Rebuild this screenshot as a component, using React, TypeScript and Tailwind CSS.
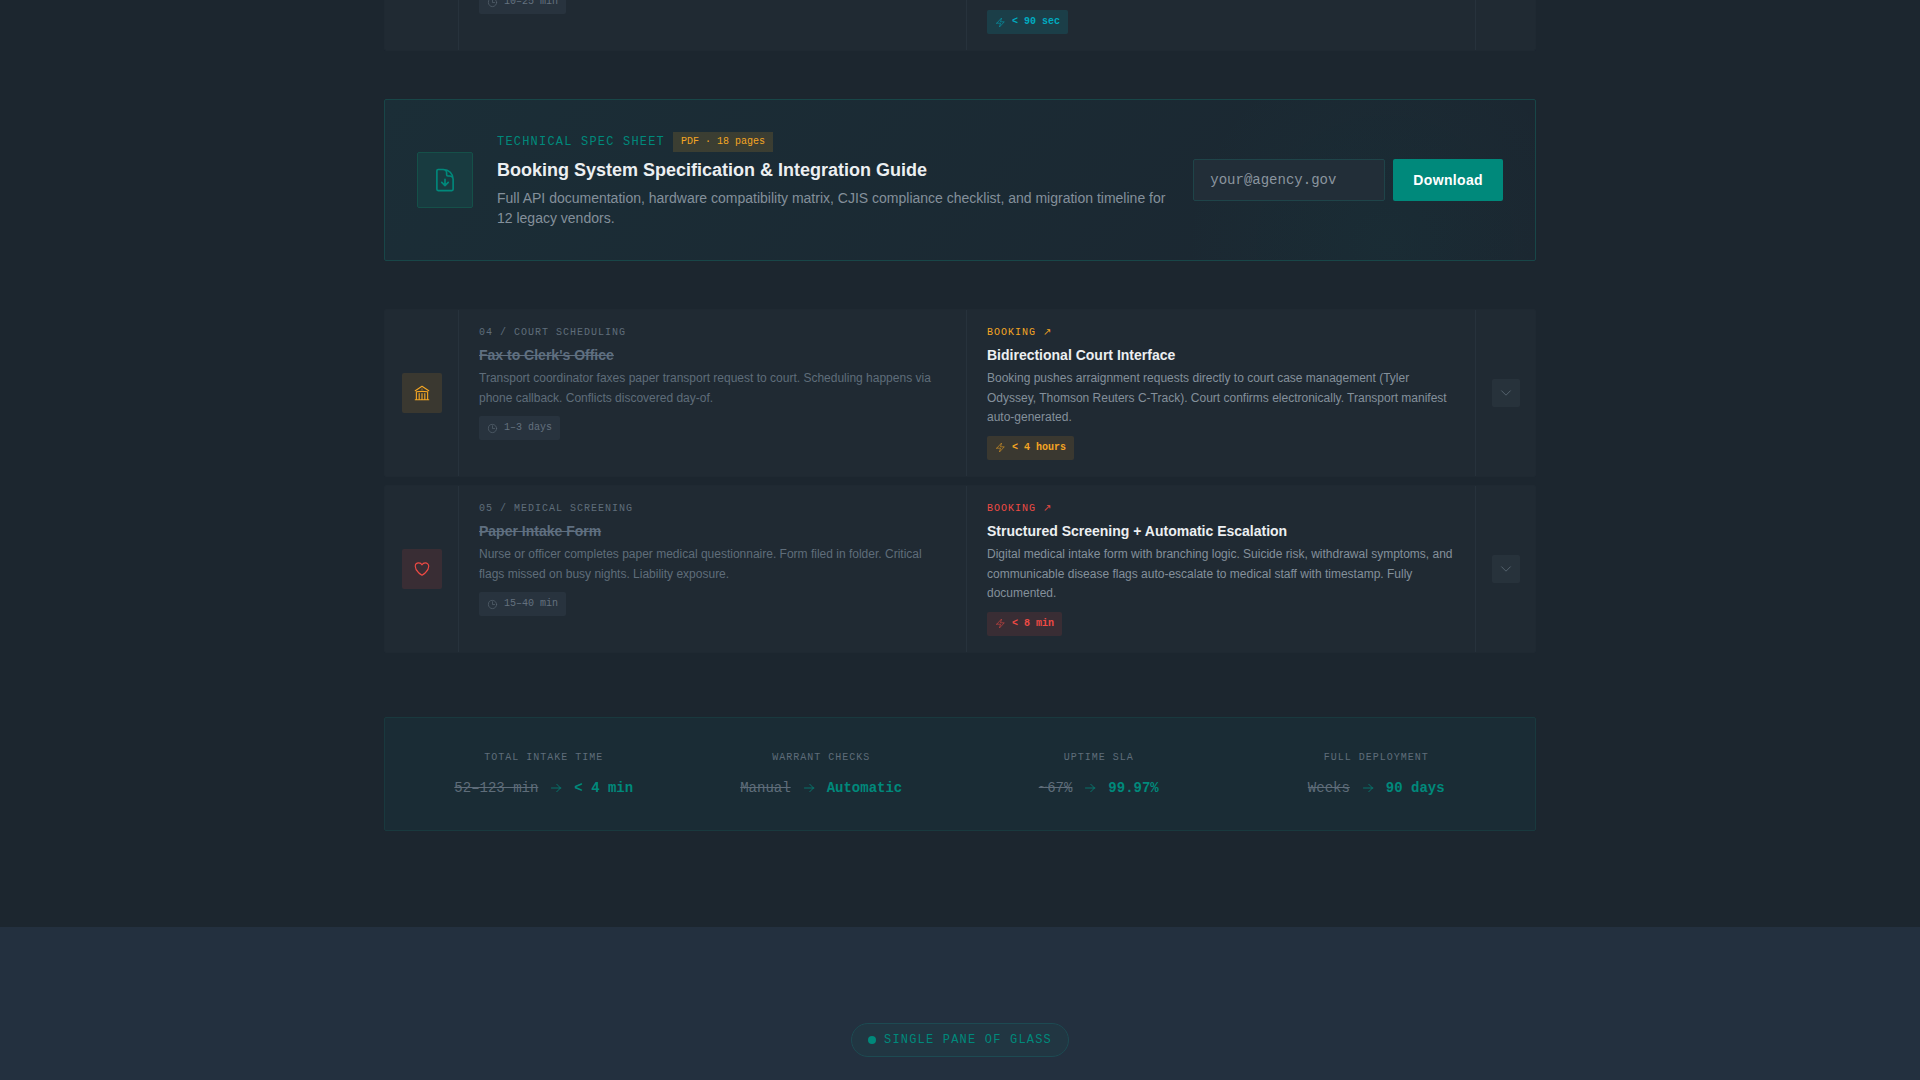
import type { ComponentType, ReactNode } from "react";
import {
  HiOutlineArrowRight,
  HiOutlineBolt,
  HiOutlineBuildingLibrary,
  HiOutlineChevronDown,
  HiOutlineClock,
  HiOutlineDocumentArrowDown,
  HiOutlineHeart,
} from "react-icons/hi2";

const mono = "font-['Liberation_Mono',monospace]";

type Tone = "amber" | "red" | "cyan" | "slate";

const toneText: Record<Tone, string> = {
  amber: "text-[#f5a623]",
  red: "text-[#ef4a44]",
  cyan: "text-[#00acc1]",
  slate: "text-[#64717e]",
};

const toneBg: Record<Tone, string> = {
  amber: "bg-[#f5a623]/12",
  red: "bg-[#ef4a44]/12",
  cyan: "bg-[#00acc1]/15",
  slate: "bg-[#28333e]",
};

function Badge({ tone, children }: { tone: Tone; children: ReactNode }) {
  const Icon = tone === "slate" ? HiOutlineClock : HiOutlineBolt;
  const weight = tone === "slate" ? "font-normal" : "font-bold";
  return (
    <span className={`flex h-6 w-fit items-center gap-1.5 rounded-xs px-2 text-[10px] ${mono} ${toneBg[tone]} ${toneText[tone]} ${weight}`}>
      <Icon className="size-[11px] opacity-80" aria-hidden />
      <span className="pb-px">{children}</span>
    </span>
  );
}

function RowShell({ icon, before, after, toggle }: { icon?: ReactNode; before: ReactNode; after: ReactNode; toggle?: ReactNode }) {
  return (
    <article className="grid min-h-42 grid-cols-[74px_1fr_1fr_60px] rounded-xs border border-[#1f2932] bg-[#202a33]">
      <div className="flex items-center justify-center border-r border-[#27323c]">{icon}</div>
      <div className="border-r border-[#27323c] px-5 py-4">{before}</div>
      <div className="px-5 py-4">{after}</div>
      <div className="flex items-center justify-center border-l border-[#27323c]">{toggle}</div>
    </article>
  );
}

type Step = {
  label: string;
  tone: Tone;
  icon: ComponentType<{ className?: string }>;
  oldTitle: string;
  oldText: string;
  oldTime: string;
  newTitle: string;
  newText: string;
  newTime: string;
};

const steps: Step[] = [
  {
    label: "04 / COURT SCHEDULING",
    tone: "amber",
    icon: HiOutlineBuildingLibrary,
    oldTitle: "Fax to Clerk's Office",
    oldText:
      "Transport coordinator faxes paper transport request to court. Scheduling happens via phone callback. Conflicts discovered day-of.",
    oldTime: "1–3 days",
    newTitle: "Bidirectional Court Interface",
    newText:
      "Booking pushes arraignment requests directly to court case management (Tyler Odyssey, Thomson Reuters C-Track). Court confirms electronically. Transport manifest auto-generated.",
    newTime: "< 4 hours",
  },
  {
    label: "05 / MEDICAL SCREENING",
    tone: "red",
    icon: HiOutlineHeart,
    oldTitle: "Paper Intake Form",
    oldText:
      "Nurse or officer completes paper medical questionnaire. Form filed in folder. Critical flags missed on busy nights. Liability exposure.",
    oldTime: "15–40 min",
    newTitle: "Structured Screening + Automatic Escalation",
    newText:
      "Digital medical intake form with branching logic. Suicide risk, withdrawal symptoms, and communicable disease flags auto-escalate to medical staff with timestamp. Fully documented.",
    newTime: "< 8 min",
  },
];

function StepRow({ step }: { step: Step }) {
  const Icon = step.icon;
  return (
    <RowShell
      icon={
        <div className={`flex size-10 items-center justify-center rounded-xs ${toneBg[step.tone]} ${toneText[step.tone]}`}>
          <Icon className="size-[18px]" />
        </div>
      }
      before={
        <>
          <p className={`mb-[5px] text-[10px] leading-[14px] tracking-widest text-[#5f6d7a] ${mono}`}>{step.label}</p>
          <h3 className="mb-1 text-sm font-bold text-[#5f6f80] line-through">{step.oldTitle}</h3>
          <p className="mb-2 text-xs leading-relaxed text-[#5f6d7a]">{step.oldText}</p>
          <Badge tone="slate">{step.oldTime}</Badge>
        </>
      }
      after={
        <>
          <p className={`mb-[5px] text-[10px] leading-[14px] tracking-widest ${mono} ${toneText[step.tone]}`}>
            BOOKING <span className="font-['DejaVu_Sans',sans-serif] leading-none">↗</span>
          </p>
          <h3 className="mb-1 text-sm font-bold text-[#eceff1]">{step.newTitle}</h3>
          <p className="mb-2 text-xs leading-relaxed text-[#84909b]">{step.newText}</p>
          <Badge tone={step.tone}>{step.newTime}</Badge>
        </>
      }
      toggle={
        <button type="button" aria-label={`Expand ${step.newTitle}`} className="flex size-7 items-center justify-center rounded-xs bg-[#27323b] text-[#5a6873]">
          <HiOutlineChevronDown className="size-3.5" />
        </button>
      }
    />
  );
}

const totals = [
  { label: "TOTAL INTAKE TIME", from: "52–123 min", to: "< 4 min" },
  { label: "WARRANT CHECKS", from: "Manual", to: "Automatic" },
  { label: "UPTIME SLA", from: "~67%", to: "99.97%" },
  { label: "FULL DEPLOYMENT", from: "Weeks", to: "90 days" },
];

export default function App() {
  return (
    <div className="min-h-screen overflow-hidden bg-[#1c262f] font-['Liberation_Sans',Arial,sans-serif]">
      <section className="mx-auto max-w-6xl pb-24">
        <div className="flex h-[51px] flex-col justify-end overflow-hidden">
          <RowShell
            before={<div className="flex h-full items-end pb-5"><Badge tone="slate">10–25 min</Badge></div>}
            after={<div className="flex h-full items-end"><Badge tone="cyan">{"< 90 sec"}</Badge></div>}
          />
        </div>

        <section className="my-12 flex items-center gap-6 rounded-xs border border-[#184648] bg-[radial-gradient(circle_at_87%_90%,#00897b0d,transparent_20%),linear-gradient(135deg,#1b2e37,#1b2630)] p-8">
          <div className="flex size-14 shrink-0 items-center justify-center rounded-xs border border-[#155049] bg-[#183b40] text-[#00897b]">
            <HiOutlineDocumentArrowDown className="size-[26px]" aria-hidden />
          </div>
          <div className="min-w-0 flex-1">
            <div className="mb-1 flex h-5 items-center gap-2">
              <span className={`text-xs tracking-widest text-[#00897b] ${mono}`}>TECHNICAL SPEC SHEET</span>
              <span className={`flex h-5 items-center bg-[#f5a623]/15 px-2 pb-px text-[10px] text-[#f5a623] ${mono}`}>PDF · 18 pages</span>
            </div>
            <h2 className="mb-1 text-lg font-bold text-[#eceff1]">Booking System Specification &amp; Integration Guide</h2>
            <p className="text-sm text-[#84909b]">
              Full API documentation, hardware compatibility matrix, CJIS compliance checklist, and migration timeline for 12 legacy vendors.
            </p>
          </div>
          <form className="flex shrink-0 gap-2" onSubmit={(e) => e.preventDefault()}>
            <input
              type="email"
              aria-label="Agency email"
              placeholder="your@agency.gov"
              className={`h-[42px] w-48 rounded-xs border border-[#1f4449] bg-[#222e38] px-4 text-sm text-[#eceff1] placeholder:text-[#8b959f] ${mono}`}
            />
            <button type="submit" className="h-[42px] rounded-xs bg-[#00897b] px-5 text-sm font-bold tracking-wide text-white">
              Download
            </button>
          </form>
        </section>

        <div className="flex flex-col gap-2">
          {steps.map((step) => (
            <StepRow key={step.label} step={step} />
          ))}
        </div>

        <dl className="mt-16 grid grid-cols-4 gap-6 rounded-xs border border-[#19393e] bg-[#1a2c35] p-8 text-center">
          {totals.map((t) => (
            <div key={t.label}>
              <dt className={`mb-3 text-[10px] leading-4 tracking-widest text-[#5f6d7a] ${mono}`}>{t.label}</dt>
              <dd className={`flex items-center justify-center gap-3 text-sm ${mono}`}>
                <span className="text-[#5f6d7a] line-through">{t.from}</span>
                <HiOutlineArrowRight className="size-3 text-[#00897b]" aria-hidden />
                <span className="font-bold text-[#00897b]">{t.to}</span>
              </dd>
            </div>
          ))}
        </dl>
      </section>

      <section className="flex justify-center bg-[#23303f] py-24">
        <div className={`flex items-center gap-2 rounded-full border border-[#1d4a52] bg-[#213642] px-4 py-2 text-xs text-[#00897b] ${mono}`}>
          <span className="size-2 rounded-full bg-[#00897b]" />
          <span className="tracking-widest">SINGLE PANE OF GLASS</span>
        </div>
      </section>
    </div>
  );
}
